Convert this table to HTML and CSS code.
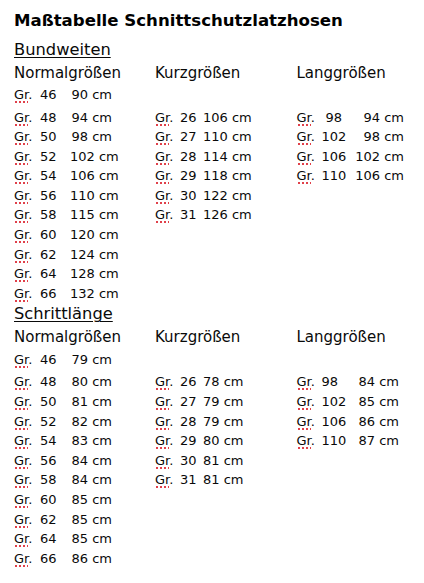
FILE: index.html
```html
<!DOCTYPE html>
<html lang="de">
<head>
<meta charset="utf-8">
<title>Maßtabelle Schnittschutzlatzhosen</title>
<link rel="stylesheet" href="styles.css">
</head>
<body>
<div class="page">
  <h1 class="title">Maßtabelle Schnittschutzlatzhosen</h1>

  <section class="sect">
    <h2 class="sect-head">Bundweiten</h2>
    <div class="cols">
      <div class="col normal">
        <div class="col-head">Normalgrößen</div>
        <div class="row first"><span class="g"><span class="sp">Gr</span>.</span><span class="n">46</span><span class="v">90 cm</span></div>
        <div class="row"><span class="g"><span class="sp">Gr</span>.</span><span class="n">48</span><span class="v">94 cm</span></div>
        <div class="row"><span class="g"><span class="sp">Gr</span>.</span><span class="n">50</span><span class="v">98 cm</span></div>
        <div class="row"><span class="g"><span class="sp">Gr</span>.</span><span class="n">52</span><span class="v">102 cm</span></div>
        <div class="row"><span class="g"><span class="sp">Gr</span>.</span><span class="n">54</span><span class="v">106 cm</span></div>
        <div class="row"><span class="g"><span class="sp">Gr</span>.</span><span class="n">56</span><span class="v">110 cm</span></div>
        <div class="row"><span class="g"><span class="sp">Gr</span>.</span><span class="n">58</span><span class="v">115 cm</span></div>
        <div class="row"><span class="g"><span class="sp">Gr</span>.</span><span class="n">60</span><span class="v">120 cm</span></div>
        <div class="row"><span class="g"><span class="sp">Gr</span>.</span><span class="n">62</span><span class="v">124 cm</span></div>
        <div class="row"><span class="g"><span class="sp">Gr</span>.</span><span class="n">64</span><span class="v">128 cm</span></div>
        <div class="row"><span class="g"><span class="sp">Gr</span>.</span><span class="n">66</span><span class="v">132 cm</span></div>
      </div>
      <div class="col kurz">
        <div class="col-head">Kurzgrößen</div>
        <div class="row first blank"></div>
        <div class="row"><span class="g"><span class="sp">Gr</span>.</span><span class="n">26</span><span class="v">106 cm</span></div>
        <div class="row"><span class="g"><span class="sp">Gr</span>.</span><span class="n">27</span><span class="v">110 cm</span></div>
        <div class="row"><span class="g"><span class="sp">Gr</span>.</span><span class="n">28</span><span class="v">114 cm</span></div>
        <div class="row"><span class="g"><span class="sp">Gr</span>.</span><span class="n">29</span><span class="v">118 cm</span></div>
        <div class="row"><span class="g"><span class="sp">Gr</span>.</span><span class="n">30</span><span class="v">122 cm</span></div>
        <div class="row"><span class="g"><span class="sp">Gr</span>.</span><span class="n">31</span><span class="v">126 cm</span></div>
      </div>
      <div class="col lang lang-b">
        <div class="col-head">Langgrößen</div>
        <div class="row first blank"></div>
        <div class="row"><span class="g"><span class="sp">Gr</span>.</span><span class="n pad">98</span><span class="v">94 cm</span></div>
        <div class="row"><span class="g"><span class="sp">Gr</span>.</span><span class="n">102</span><span class="v">98 cm</span></div>
        <div class="row"><span class="g"><span class="sp">Gr</span>.</span><span class="n">106</span><span class="v">102 cm</span></div>
        <div class="row"><span class="g"><span class="sp">Gr</span>.</span><span class="n">110</span><span class="v">106 cm</span></div>
      </div>
    </div>
  </section>

  <section class="sect">
    <h2 class="sect-head">Schrittlänge</h2>
    <div class="cols">
      <div class="col normal">
        <div class="col-head">Normalgrößen</div>
        <div class="row first"><span class="g"><span class="sp">Gr</span>.</span><span class="n">46</span><span class="v">79 cm</span></div>
        <div class="row"><span class="g"><span class="sp">Gr</span>.</span><span class="n">48</span><span class="v">80 cm</span></div>
        <div class="row"><span class="g"><span class="sp">Gr</span>.</span><span class="n">50</span><span class="v">81 cm</span></div>
        <div class="row"><span class="g"><span class="sp">Gr</span>.</span><span class="n">52</span><span class="v">82 cm</span></div>
        <div class="row"><span class="g"><span class="sp">Gr</span>.</span><span class="n">54</span><span class="v">83 cm</span></div>
        <div class="row"><span class="g"><span class="sp">Gr</span>.</span><span class="n">56</span><span class="v">84 cm</span></div>
        <div class="row"><span class="g"><span class="sp">Gr</span>.</span><span class="n">58</span><span class="v">84 cm</span></div>
        <div class="row"><span class="g"><span class="sp">Gr</span>.</span><span class="n">60</span><span class="v">85 cm</span></div>
        <div class="row"><span class="g"><span class="sp">Gr</span>.</span><span class="n">62</span><span class="v">85 cm</span></div>
        <div class="row"><span class="g"><span class="sp">Gr</span>.</span><span class="n">64</span><span class="v">85 cm</span></div>
        <div class="row"><span class="g"><span class="sp">Gr</span>.</span><span class="n">66</span><span class="v">86 cm</span></div>
      </div>
      <div class="col kurz">
        <div class="col-head">Kurzgrößen</div>
        <div class="row first blank"></div>
        <div class="row"><span class="g"><span class="sp">Gr</span>.</span><span class="n">26</span><span class="v">78 cm</span></div>
        <div class="row"><span class="g"><span class="sp">Gr</span>.</span><span class="n">27</span><span class="v">79 cm</span></div>
        <div class="row"><span class="g"><span class="sp">Gr</span>.</span><span class="n">28</span><span class="v">79 cm</span></div>
        <div class="row"><span class="g"><span class="sp">Gr</span>.</span><span class="n">29</span><span class="v">80 cm</span></div>
        <div class="row"><span class="g"><span class="sp">Gr</span>.</span><span class="n">30</span><span class="v">81 cm</span></div>
        <div class="row"><span class="g"><span class="sp">Gr</span>.</span><span class="n">31</span><span class="v">81 cm</span></div>
      </div>
      <div class="col lang lang-s">
        <div class="col-head">Langgrößen</div>
        <div class="row first blank"></div>
        <div class="row"><span class="g"><span class="sp">Gr</span>.</span><span class="n">98</span><span class="v">84 cm</span></div>
        <div class="row"><span class="g"><span class="sp">Gr</span>.</span><span class="n">102</span><span class="v">85 cm</span></div>
        <div class="row"><span class="g"><span class="sp">Gr</span>.</span><span class="n">106</span><span class="v">86 cm</span></div>
        <div class="row"><span class="g"><span class="sp">Gr</span>.</span><span class="n">110</span><span class="v">87 cm</span></div>
      </div>
    </div>
  </section>
</div>
</body>
</html>
```

FILE: styles.css
```css
html, body {
  margin: 0;
  padding: 0;
  background: #ffffff;
}

body {
  font-family: "DejaVu Sans", Verdana, sans-serif;
  color: #0a0a0a;
}

.page {
  padding: 0 0 0 14px;
}

.title {
  margin: 0;
  padding-top: 7px;
  font-size: 16.6px;
  font-weight: bold;
  line-height: 28px;
  height: 31.5px;
  color: #000;
}

.sect-head {
  margin: 0;
  font-size: 16.3px;
  font-weight: normal;
  line-height: 22px;
  text-decoration: underline;
  text-decoration-thickness: 1px;
  text-underline-offset: 2px;
}

.cols {
  display: grid;
  grid-template-columns: 141px 141.5px auto;
}

.col-head {
  margin-top: 1px;
  margin-bottom: 1.5px;
  font-size: 15px;
  line-height: 22px;
}

.row {
  display: flex;
  font-size: 13px;
  line-height: 19.6px;
  height: 19.6px;
  white-space: nowrap;
}

.row.first {
  height: 22.5px;
}

.sp {
  padding-bottom: 1px;
  background-image:
    linear-gradient(45deg, transparent 38%, #e0404a 38%, #e0404a 62%, transparent 62%),
    linear-gradient(-45deg, transparent 38%, #e0404a 38%, #e0404a 62%, transparent 62%);
  background-size: 4px 2px;
  background-repeat: repeat-x;
  background-position: 0 100%;
}

.g {
  width: 26px;
  flex: none;
}

.n {
  flex: none;
}

.v {
  flex: none;
}

/* Normalgrößen */
.normal .n { width: 30px; }
.normal .v { width: 42px; text-align: right; }

/* Kurzgrößen */
.kurz .g { width: 25px; }
.kurz .n { width: 23px; }

/* Langgrößen */
.lang .g { width: 25px; }
.lang-b .n { width: 30px; }
.lang-b .n.pad { padding-left: 4px; width: 26px; }
.lang-b .v { width: 52.5px; text-align: right; }
.lang-s .n { width: 37px; }
```
